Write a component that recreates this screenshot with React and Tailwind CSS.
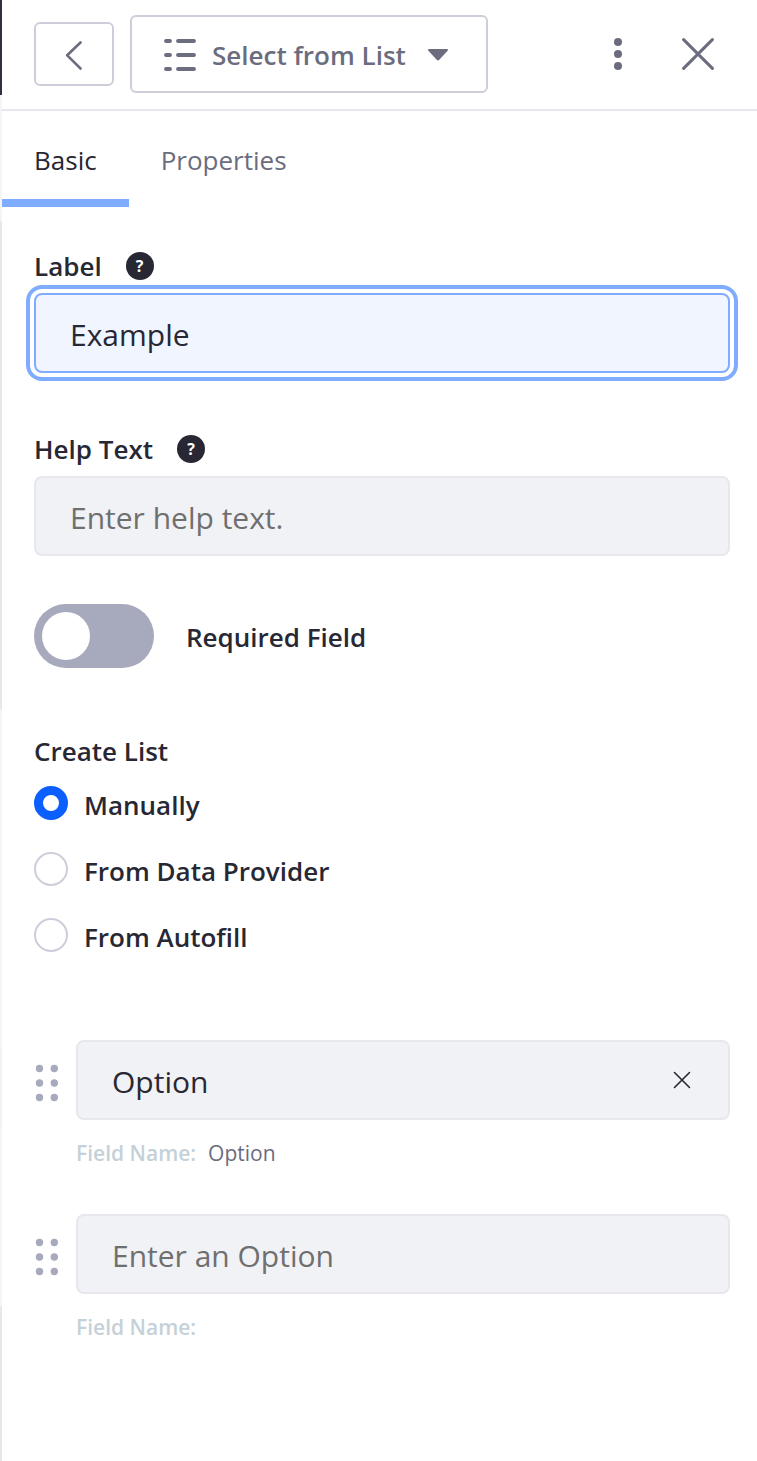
import { useState } from "react";

const fieldBox = "rounded-lg border-2 border-[#e7e7ed] bg-[#f1f2f5]";
const fieldText =
  "h-[80px] w-full pt-[2px] text-[30px] text-[#272833] outline-none placeholder:text-[#6f6f6f] placeholder:opacity-100";

function HelpBadge({ label }) {
  return (
    <button
      type="button"
      aria-label={label}
      className="flex h-7 w-7 items-center justify-center rounded-full bg-[#272833] text-base leading-none font-bold text-white"
    >
      ?
    </button>
  );
}

function TextField({ id, label, help, className, ...rest }) {
  return (
    <div className="flex flex-col">
      <div className="flex h-[55px] items-center gap-6">
        <label htmlFor={id} className="pt-[2px] text-[26px] font-semibold">
          {label}
        </label>
        <HelpBadge label={help} />
      </div>
      <input id={id} type="text" className={`${fieldText} px-[34px] ${className}`} {...rest} />
    </div>
  );
}

function OptionRow({ id, defaultValue, placeholder, name, clearable }) {
  const [value, setValue] = useState(defaultValue);
  return (
    <li className="flex gap-4">
      <button type="button" aria-label="Reorder option" className="flex h-[86px] w-[26px] shrink-0 items-center">
        <svg width="26" height="40" viewBox="0 0 26 40" fill="#a7a9bc">
          <circle cx="5.5" cy="5.5" r="3.7" />
          <circle cx="20.3" cy="5.5" r="3.7" />
          <circle cx="5.5" cy="20" r="3.7" />
          <circle cx="20.3" cy="20" r="3.7" />
          <circle cx="5.5" cy="34.5" r="3.7" />
          <circle cx="20.3" cy="34.5" r="3.7" />
        </svg>
      </button>
      <div className="flex min-w-0 flex-1 flex-col gap-[14px]">
        <div className={`flex h-[80px] items-center ${fieldBox}`}>
          <input
            id={id}
            type="text"
            aria-label="Option"
            value={value}
            placeholder={placeholder}
            onChange={(e) => setValue(e.target.value)}
            className={`${fieldText} min-w-0 flex-1 bg-transparent px-[34px]`}
          />
          {clearable && (
            <button
              type="button"
              aria-label="Remove option"
              onClick={() => setValue("")}
              className="mr-[30px] flex h-8 w-8 shrink-0 items-center justify-center"
            >
              <svg width="18" height="18" viewBox="0 0 18 18" stroke="#272833" strokeWidth="1.6" strokeLinecap="round">
                <path d="M1.5 1.5 16.5 16.5M16.5 1.5 1.5 16.5" />
              </svg>
            </button>
          )}
        </div>
        <p className="flex h-10 items-center gap-3 text-[21px]">
          <span className="font-semibold text-[#c5d1d8]">Field Name:</span>
          <span className="text-[#6b6c7e]">{name}</span>
        </p>
      </div>
    </li>
  );
}

export default function App() {
  const [required, setRequired] = useState(false);
  const [source, setSource] = useState("Manually");
  return (
    <div className="flex min-h-screen bg-white font-['Open_Sans','Noto_Sans',sans-serif] text-[#272833]">
      <div className="flex w-[2px] shrink-0 flex-col bg-[#f5f5f5]" aria-hidden="true">
        <div className="h-[95px] bg-[#30313f]" />
        <div className="mt-[126px] h-[488px] bg-[#e7e7ed]" />
        <div className="mt-[339px] h-[80px] bg-[#f1f2f5]" />
        <div className="mt-[178px] flex-1 bg-[#e7e7ed]" />
      </div>

      <main className="min-w-0 flex-1">
        <header className="flex items-center gap-4 border-b-2 border-[#e7e7ed] pt-[15px] pr-[27px] pb-4 pl-8 text-[#6b6c7e]">
          <button
            type="button"
            aria-label="Back"
            className="flex h-16 w-20 items-center justify-center rounded-md border-2 border-[#cdced9]"
          >
            <svg width="32" height="32" viewBox="0 0 32 32" fill="none" stroke="#6b6c7e" strokeWidth="2.6" strokeLinecap="round" strokeLinejoin="round">
              <path d="M22.5 4.5 9.2 17.3 22.5 30.5" />
            </svg>
          </button>
          <button
            type="button"
            className="flex h-[78px] items-center gap-4 rounded-md border-2 border-[#cdced9] px-8 text-[26px] font-semibold"
          >
            <svg width="32" height="34" viewBox="0 0 32 34" stroke="#6b6c7e" strokeWidth="3.8" strokeLinecap="round">
              <path d="M2 4H6M14 4H30M2 18H6M14 18H30M2 32H6M14 32H30" />
            </svg>
            <span className="pt-[2px] whitespace-nowrap">Select from List</span>
            <svg width="32" height="32" viewBox="0 0 32 32" fill="#6b6c7e">
              <path d="M7.3 11H24.7Q27 11 25.6 12.8L17.3 21.8Q16 23 14.7 21.8L6.4 12.8Q5 11 7.3 11Z" />
            </svg>
          </button>
          <div className="ml-auto flex items-center gap-6">
            <button type="button" aria-label="More actions" className="flex h-12 w-12 items-center justify-center">
              <svg width="32" height="32" viewBox="0 0 32 32" fill="#6b6c7e">
                <circle cx="16" cy="4" r="4" />
                <circle cx="16" cy="16" r="4" />
                <circle cx="16" cy="28" r="4" />
              </svg>
            </button>
            <button type="button" aria-label="Close" className="flex h-16 w-16 items-center justify-center">
              <svg width="32" height="32" viewBox="0 0 32 32" stroke="#6b6c7e" strokeWidth="3" strokeLinecap="round">
                <path d="M1.6 1.6 30.4 30.4M30.4 1.6 1.6 30.4" />
              </svg>
            </button>
          </div>
        </header>

        <nav className="flex text-[26px]">
          <a href="#basic" aria-current="page" className="flex h-24 items-center border-b-8 border-[#80acff] px-8 pt-[10px]">
            Basic
          </a>
          <a href="#properties" className="flex h-24 items-center border-b-8 border-transparent px-8 pt-[10px] text-[#6b6c7e]">
            Properties
          </a>
        </nav>

        <form className="pt-[31px] pr-[27px] pb-16 pl-8">
          <div className="flex flex-col gap-12">
            <TextField
              id="label"
              label="Label"
              help="About the label"
              defaultValue="Example"
              className="rounded-lg border-2 border-[#80acff] bg-[#f0f5ff] ring-4 ring-[#80acff] ring-offset-4"
            />
            <TextField
              id="help-text"
              label="Help Text"
              help="About the help text"
              placeholder="Enter help text."
              className={fieldBox}
            />
            <label className="flex items-center gap-8 self-start text-[26px] font-semibold">
              <input
                type="checkbox"
                role="switch"
                checked={required}
                onChange={(e) => setRequired(e.target.checked)}
                className="h-16 w-[120px] appearance-none rounded-full bg-[#a7a9bc] p-2 before:block before:h-12 before:w-12 before:rounded-full before:bg-white checked:bg-[#0b5fff] checked:before:ml-auto"
              />
              <span className="pt-[2px]">Required Field</span>
            </label>
          </div>

          <fieldset className="mt-14">
            <legend className="h-[55px] text-[26px] leading-[55px] font-semibold">Create List</legend>
            <div className="flex flex-col gap-8 pt-[7px]">
              {["Manually", "From Data Provider", "From Autofill"].map((name) => (
                <label key={name} className="flex h-[34px] items-center gap-4 text-[26px] leading-[34px] font-semibold">
                  <input
                    type="radio"
                    name="source"
                    checked={source === name}
                    onChange={() => setSource(name)}
                    className="h-[34px] w-[34px] appearance-none rounded-full border-2 border-[#cdced9] bg-white checked:border-[9px] checked:border-[#0b5fff]"
                  />
                  <span className="pt-1">{name}</span>
                </label>
              ))}
            </div>
          </fieldset>

          <ul className="mt-[88px] flex flex-col gap-10">
            <OptionRow id="option-1" defaultValue="Option" name="Option" clearable />
            <OptionRow id="option-2" defaultValue="" placeholder="Enter an Option" name="" />
          </ul>
        </form>
      </main>
    </div>
  );
}
